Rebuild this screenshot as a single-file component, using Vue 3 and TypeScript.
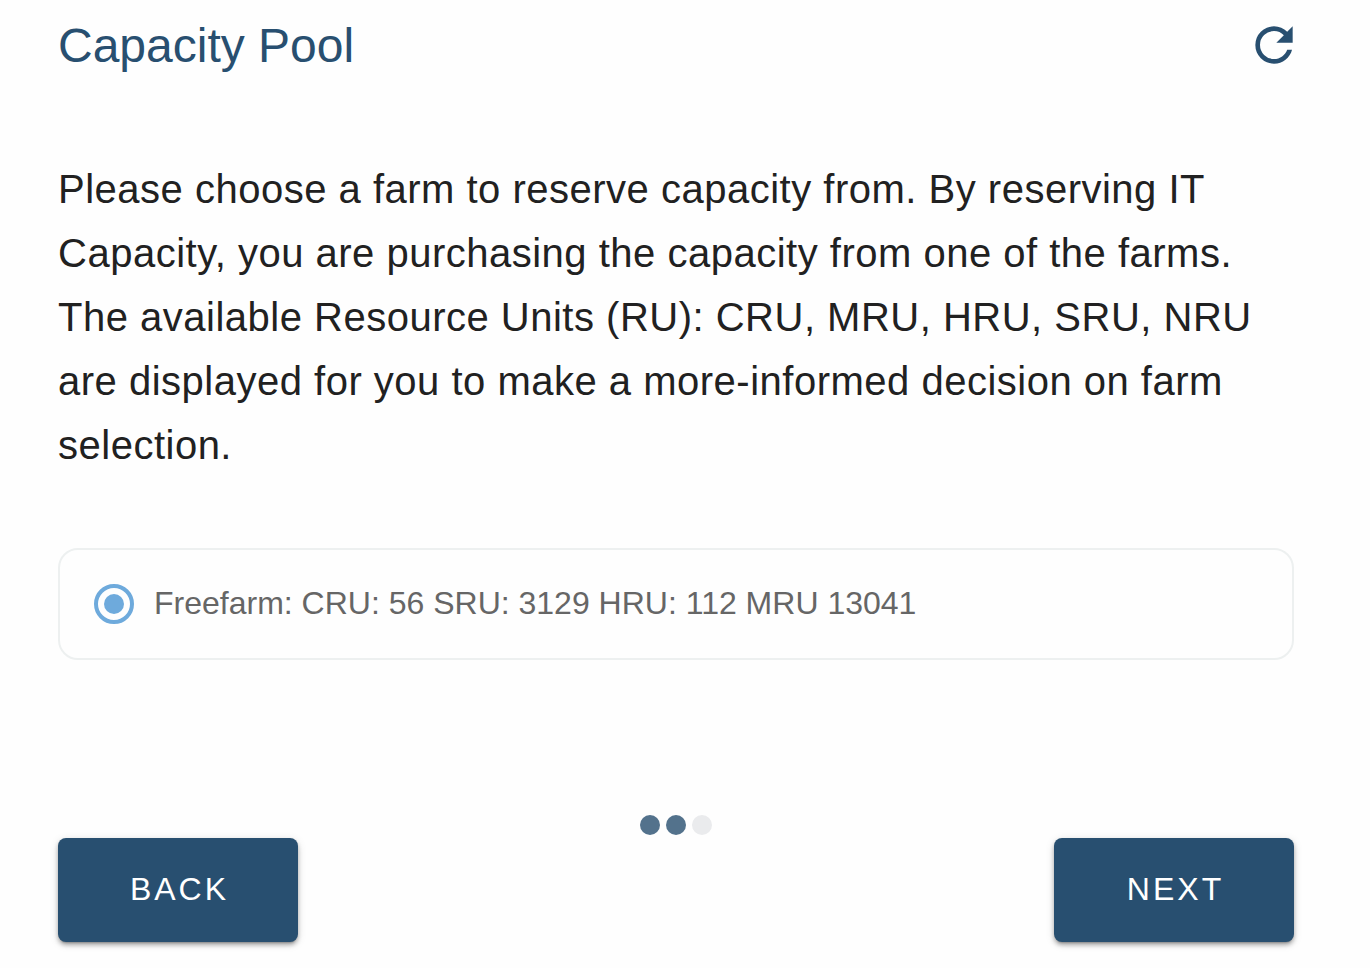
<script setup lang="ts">
import { ref } from 'vue'

interface Farm {
  id: string
  label: string
}

const farms: Farm[] = [
  { id: 'freefarm', label: 'Freefarm: CRU: 56 SRU: 3129 HRU: 112 MRU 13041' },
]
const selected = ref<string>('freefarm')
const stepCount = 3
const step = ref<number>(2)

function back(): void {
  step.value = Math.max(1, step.value - 1)
}
function next(): void {
  step.value = Math.min(stepCount, step.value + 1)
}
function refresh(): void {
  selected.value = farms[0].id
}
</script>

<template>
  <main class="page">
    <header class="head">
      <h1 class="title">Capacity Pool</h1>
      <button class="refresh" type="button" aria-label="Refresh" @click="refresh">
        <svg viewBox="0 0 24 24" aria-hidden="true">
          <path
            d="M17.65,6.35C16.2,4.9 14.21,4 12,4A8,8 0 0,0 4,12A8,8 0 0,0 12,20C15.73,20 18.84,17.45 19.73,14H17.65C16.83,16.33 14.61,18 12,18A6,6 0 0,1 6,12A6,6 0 0,1 12,6C13.66,6 15.14,6.69 16.22,7.78L13,11H20V4L17.65,6.35Z"
          />
        </svg>
      </button>
    </header>

    <p class="intro">
      Please choose a farm to reserve capacity from. By reserving IT Capacity, you are purchasing
      the capacity from one of the farms. The available Resource Units (RU): CRU, MRU, HRU, SRU, NRU
      are displayed for you to make a more-informed decision on farm selection.
    </p>

    <div class="farms" role="radiogroup" aria-label="Farms">
      <label v-for="farm in farms" :key="farm.id" class="farm" :for="farm.id">
        <input :id="farm.id" v-model="selected" class="radio" type="radio" name="farm" :value="farm.id" />
        <span class="farm-label">{{ farm.label }}</span>
      </label>
    </div>

    <footer class="foot">
      <div class="dots">
        <span v-for="n in stepCount" :key="n" class="dot" :class="{ done: n <= step }"></span>
      </div>
      <div class="actions">
        <button class="btn" type="button" @click="back">BACK</button>
        <button class="btn" type="button" @click="next">NEXT</button>
      </div>
    </footer>
  </main>
</template>

<style>
body {
  background: #fefefe;
}
</style>

<style scoped>
.page {
  padding: 17px 76px 26px 58px;
  font-family: "Liberation Sans", Arial, sans-serif;
  color: #212121;
}
.head {
  display: flex;
  justify-content: space-between;
  align-items: flex-start;
}
.title {
  margin: 0;
  font-size: 48px;
  line-height: 58px;
  font-weight: 400;
  color: #284f70;
}
.refresh {
  width: 56px;
  height: 56px;
  margin-right: -8px;
  padding: 0;
  border: 0;
  background: none;
  cursor: pointer;
}
.refresh svg {
  display: block;
  width: 56px;
  height: 56px;
  fill: #284f70;
}
.intro {
  margin: 82px 0 71px;
  font-size: 40px;
  line-height: 64px;
  letter-spacing: 0.0125em;
}
.farms {
  display: grid;
  gap: 16px;
}
.farm {
  display: flex;
  align-items: center;
  gap: 20px;
  box-sizing: border-box;
  min-height: 112px;
  padding: 0 34px;
  border: 2px solid #edf0f0;
  border-radius: 20px;
  font-size: 32px;
  line-height: 40px;
  color: #666;
  cursor: pointer;
}
.farm-label {
  padding-bottom: 2px;
}
.radio {
  appearance: none;
  flex: none;
  display: grid;
  place-items: center;
  width: 40px;
  height: 40px;
  margin: 0;
  border: 4px solid #6eaadc;
  border-radius: 50%;
}
.radio:checked::before {
  content: "";
  width: 20px;
  height: 20px;
  border-radius: 50%;
  background: #6eaadc;
}
.foot {
  margin-top: 155px;
}
.dots {
  display: flex;
  justify-content: center;
  gap: 6px;
  margin-bottom: 3px;
}
.dot {
  width: 20px;
  height: 20px;
  border-radius: 50%;
  background: #eaebed;
}
.dot.done {
  background: #53728c;
}
.actions {
  display: flex;
  justify-content: space-between;
}
.btn {
  min-width: 240px;
  height: 104px;
  padding: 0 32px 2px;
  border: 0;
  border-radius: 8px;
  background: #284f70;
  color: #fff;
  font-family: inherit;
  font-size: 32px;
  letter-spacing: 3px;
  text-indent: 3px;
  box-shadow: 0 3px 2px -2px rgba(0, 0, 0, 0.2), 0 3px 4px rgba(0, 0, 0, 0.28), 0 2px 10px rgba(0, 0, 0, 0.12);
  cursor: pointer;
}
</style>
